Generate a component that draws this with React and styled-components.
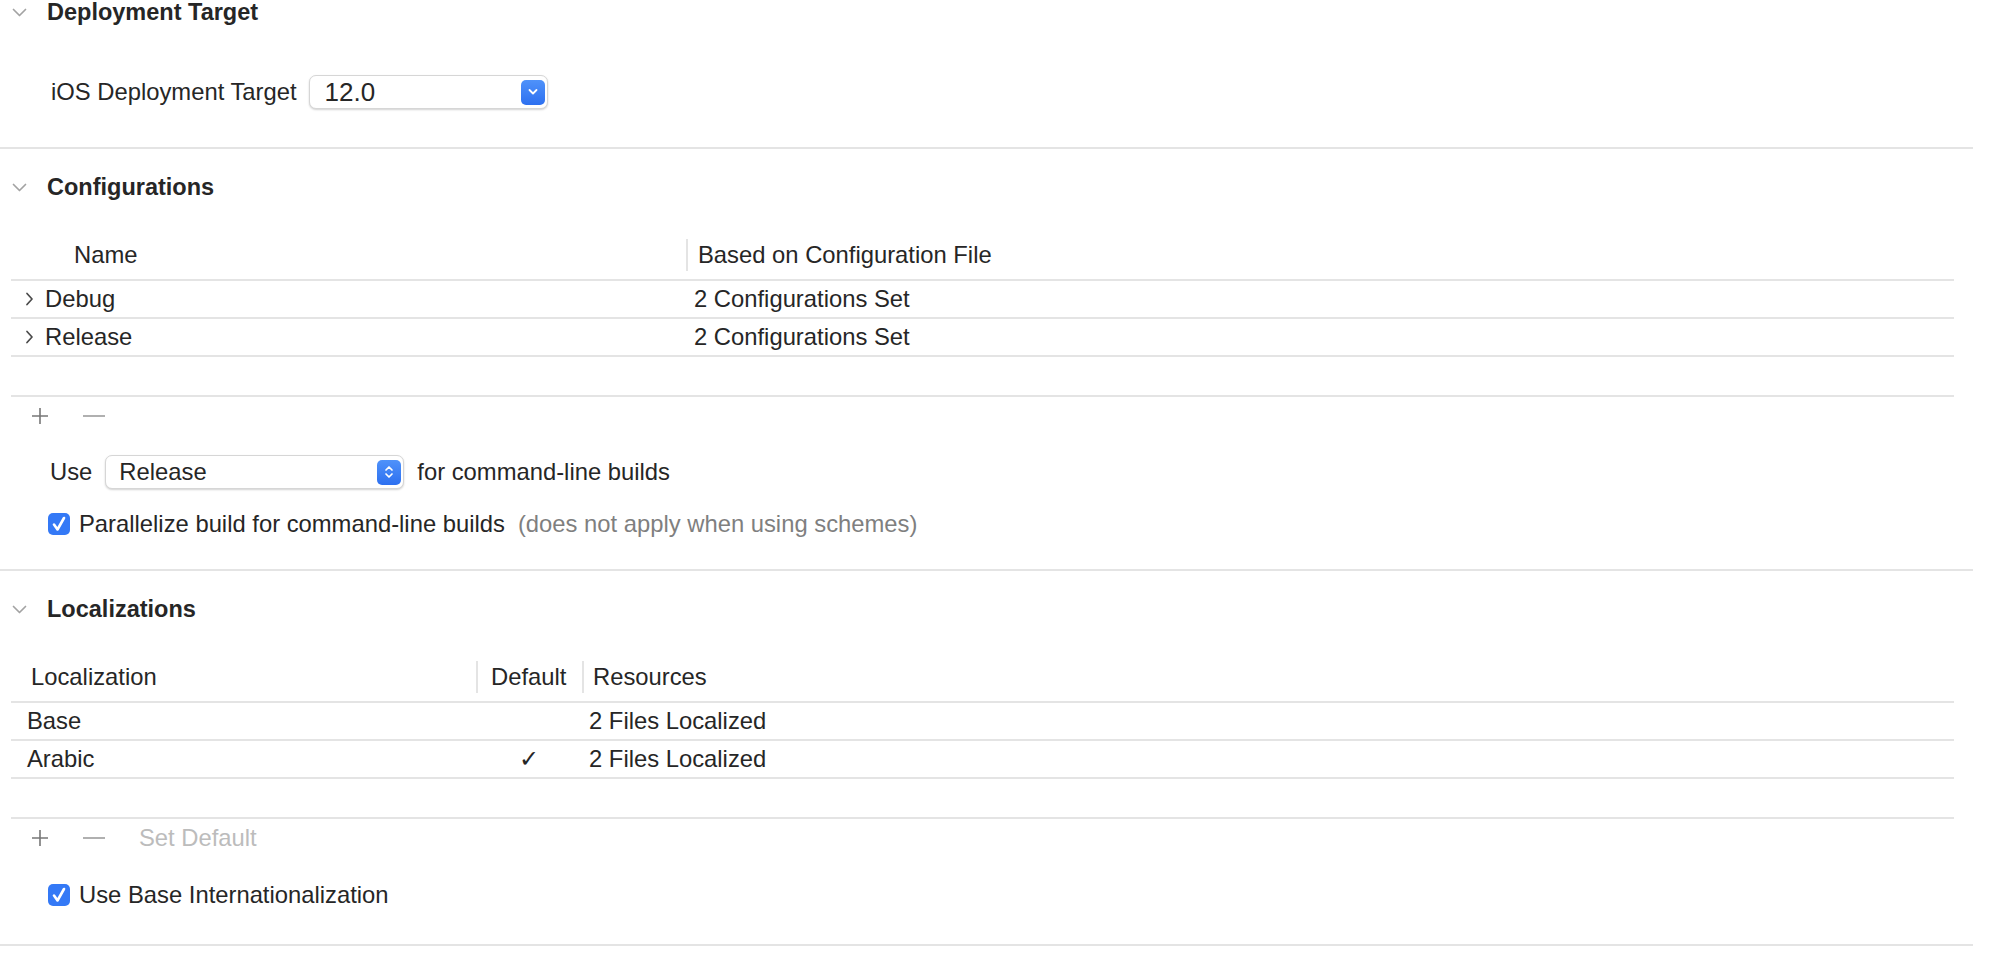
import React from 'react'
import styled, { createGlobalStyle } from 'styled-components'

const ink = '#262626'
const rule = '#e4e4e4'
const blue = '#3479f6'

const Global = createGlobalStyle`
  html, body {
    margin: 0;
    background: #fff;
  }
  body {
    font-family: "Liberation Sans", Arial, sans-serif;
    font-size: 23.8px;
    color: ${ink};
    overflow: hidden;
  }
`

const Page = styled.div`
  width: 1973px;
  margin-top: -26px;
`

const Section = styled.section`
  border-bottom: 2px solid ${rule};
  padding-bottom: ${p => p.$bottom}px;
`

const Header = styled.div`
  height: 76px;
  display: flex;
  align-items: center;
  gap: 20px;
  padding-left: 12px;
  font-weight: bold;
  font-size: 23.5px;
`

const Row = styled.div`
  height: 52px;
  display: flex;
  align-items: center;
  gap: ${p => p.$gap || 12}px;
  padding-left: ${p => p.$indent || 48}px;
`

const Options = styled.div`
  margin-top: ${p => p.$top}px;
`

const Popup = styled.div`
  box-sizing: border-box;
  width: ${p => p.$width}px;
  height: 34px;
  display: flex;
  align-items: center;
  justify-content: space-between;
  padding: 0 2px 0 ${p => p.$pad}px;
  border: 1px solid #d6d6d6;
  border-radius: 7px;
  background: #fff;
  box-shadow: 0 1px 2px rgba(0, 0, 0, 0.18);
  font-size: ${p => p.$size || 23.8}px;
`

const PopButton = styled.span`
  width: 24px;
  height: 25px;
  border-radius: 5px;
  background: linear-gradient(#4f92fa, #2d70f0);
  display: flex;
  align-items: center;
  justify-content: center;
`

const Box = styled.span`
  width: 22px;
  height: 22px;
  border-radius: 5px;
  background: ${blue};
  display: flex;
  align-items: center;
  justify-content: center;
  flex: none;
`

const Muted = styled.span`
  color: #7f7f7f;
  margin-left: 13px;
`

const Table = styled.div`
  margin: 0 19px 0 11px;
`

const Grid = styled.div`
  display: grid;
  grid-template-columns: ${p => p.$cols};
  align-items: center;
  height: ${p => p.$h}px;
  padding-top: ${p => p.$top || 0}px;
  border-bottom: 2px solid ${rule};
`

const HeadCell = styled.div`
  height: 32px;
  display: flex;
  align-items: center;
  padding-left: ${p => p.$pad}px;
  border-left: ${p => (p.$sep ? `2px solid ${rule}` : 'none')};
`

const Cell = styled.div`
  display: flex;
  align-items: center;
  gap: 11px;
  padding-left: ${p => p.$pad}px;
  justify-content: ${p => (p.$center ? 'center' : 'flex-start')};
`

const Toolbar = styled.div`
  height: 34px;
  display: flex;
  align-items: center;
  gap: 34px;
  padding-left: 31px;
  padding-top: 2px;
`

const Faint = styled.span`
  color: #bcbcbc;
`

const DownChevron = () => (
  <svg width="15" height="9" viewBox="0 0 15 9">
    <path d="M1.5 1.5 L7.5 7.5 L13.5 1.5" fill="none" stroke="#a3a3a3" strokeWidth="1.7" strokeLinecap="round" strokeLinejoin="round" />
  </svg>
)

const RightChevron = () => (
  <svg width="9" height="14" viewBox="0 0 9 14">
    <path d="M2 1.5 L7 7 L2 12.5" fill="none" stroke="#4a4a4a" strokeWidth="1.7" strokeLinecap="round" strokeLinejoin="round" />
  </svg>
)

const Plus = () => (
  <svg width="18" height="18" viewBox="0 0 18 18">
    <path d="M9 1 V17 M1 9 H17" stroke="#777" strokeWidth="1.6" />
  </svg>
)

const Minus = () => (
  <svg width="22" height="18" viewBox="0 0 22 18">
    <path d="M0 9 H22" stroke="#a8a8a8" strokeWidth="1.8" />
  </svg>
)

const Check = () => (
  <svg width="14" height="16" viewBox="0 0 14 16">
    <path d="M2 8.5 L5.5 13.5 L12 2" fill="none" stroke="#fff" strokeWidth="2.6" strokeLinecap="round" strokeLinejoin="round" />
  </svg>
)

const Checkbox = ({ children }) => (
  <Row $gap={9}>
    <Box><Check /></Box>
    <span>{children}</span>
  </Row>
)

const SectionHeader = ({ title }) => (
  <Header>
    <DownChevron />
    <span>{title}</span>
  </Header>
)

const configCols = '675px 1fr'
const locCols = '465px 106px 1fr'

const configs = ['Debug', 'Release']
const locs = [
  { name: 'Base', isDefault: false },
  { name: 'Arabic', isDefault: true },
]

const App = () => (
  <>
    <Global />
    <Page>
      <Section $bottom={29}>
        <SectionHeader title="Deployment Target" />
        <Options $top={16}>
          <Row $indent={51} $gap={12}>
            <span>iOS Deployment Target</span>
            <Popup $width={239} $pad={15} $size={26}>
              <span>12.0</span>
              <PopButton>
                <svg width="12" height="8" viewBox="0 0 12 8">
                  <path d="M2.5 2 L6 5.5 L9.5 2" fill="none" stroke="#fff" strokeWidth="1.8" strokeLinecap="round" strokeLinejoin="round" />
                </svg>
              </PopButton>
            </Popup>
          </Row>
        </Options>
      </Section>

      <Section $bottom={19}>
        <SectionHeader title="Configurations" />
        <Table>
          <Grid $cols={configCols} $h={49} $top={5}>
            <HeadCell $pad={63}>Name</HeadCell>
            <HeadCell $sep $pad={10}>Based on Configuration File</HeadCell>
          </Grid>
          {configs.map(c => (
            <Grid key={c} $cols={configCols} $h={36}>
              <Cell $pad={14}>
                <RightChevron />
                <span>{c}</span>
              </Cell>
              <Cell $pad={8}>2 Configurations Set</Cell>
            </Grid>
          ))}
          <Grid $cols={configCols} $h={38} />
        </Table>
        <Toolbar>
          <Plus />
          <Minus />
        </Toolbar>
        <Options $top={13}>
          <Row $indent={50} $gap={13}>
            <span>Use</span>
            <Popup $width={299} $pad={13}>
              <span>Release</span>
              <PopButton>
                <svg width="12" height="18" viewBox="0 0 12 18">
                  <path d="M3 7 L6 4 L9 7 M3 11 L6 14 L9 11" fill="none" stroke="#fff" strokeWidth="1.7" strokeLinecap="round" strokeLinejoin="round" />
                </svg>
              </PopButton>
            </Popup>
            <span>for command-line builds</span>
          </Row>
          <Checkbox>
            Parallelize build for command-line builds
            <Muted>(does not apply when using schemes)</Muted>
          </Checkbox>
        </Options>
      </Section>

      <Section $bottom={23}>
        <SectionHeader title="Localizations" />
        <Table>
          <Grid $cols={locCols} $h={49} $top={5}>
            <HeadCell $pad={20}>Localization</HeadCell>
            <HeadCell $sep $pad={13}>Default</HeadCell>
            <HeadCell $sep $pad={9}>Resources</HeadCell>
          </Grid>
          {locs.map(l => (
            <Grid key={l.name} $cols={locCols} $h={36}>
              <Cell $pad={16}>{l.name}</Cell>
              <Cell $center>{l.isDefault ? '✓' : ''}</Cell>
              <Cell $pad={7}>2 Files Localized</Cell>
            </Grid>
          ))}
          <Grid $cols={locCols} $h={38} />
        </Table>
        <Toolbar>
          <Plus />
          <Minus />
          <Faint>Set Default</Faint>
        </Toolbar>
        <Options $top={14}>
          <Checkbox>Use Base Internationalization</Checkbox>
        </Options>
      </Section>
    </Page>
  </>
)

export default App
